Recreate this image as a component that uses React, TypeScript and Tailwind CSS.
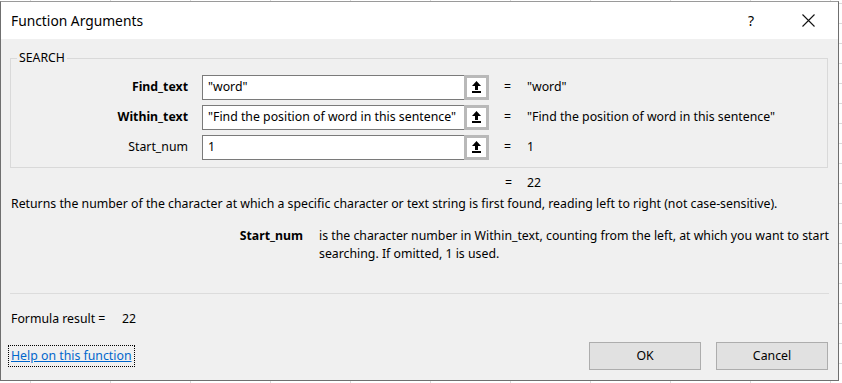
import React from "react";

const F = { fontFamily: '"Noto Sans", "Open Sans", sans-serif' };

function RefButton() {
  return (
    <div className="w-[25px] h-[25px] border-[3px] border-[#b9b9b9] bg-white flex items-center justify-center shrink-0">
      <svg width="9" height="13" viewBox="0 0 9 13">
        <polygon points="4.5,0 9,5 0,5" fill="#000" />
        <rect x="3" y="4" width="3" height="5" fill="#000" />
        <rect x="0" y="10" width="9" height="2" fill="#000" />
      </svg>
    </div>
  );
}

function ArgRow({ label, bold, value, result }: { label: string; bold?: boolean; value: string; result: string }) {
  return (
    <div className="flex items-center h-[25px]">
      <div className={`w-[191px] shrink-0 text-right pr-[14px] text-[12.3px] text-black ${bold ? "font-bold" : ""}`}>{label}</div>
      <div className="w-[262px] shrink-0 h-[25px] border border-[#7a7a7a] border-r-0 bg-white flex items-center pl-[5px] text-[12.3px] text-black whitespace-nowrap overflow-hidden">
        {value}
      </div>
      <RefButton />
      <div className="w-[23px] ml-[15px] shrink-0 text-[12.3px] text-black">=</div>
      <div className="text-[12.3px] text-black whitespace-nowrap">{result}</div>
    </div>
  );
}

export default function App() {
  return (
    <div
      className="relative w-[842px] h-[383px] overflow-hidden bg-white bg-[repeating-linear-gradient(90deg,transparent_0_30px,#dadada_30px_31px,transparent_31px_80px),repeating-linear-gradient(0deg,transparent_0_19px,#dadada_19px_20px)]"
      style={F}
    >
      <div className="absolute left-0 top-[1px] w-[839px] h-[380px] border border-[#6f6f6f] border-t-[#9a9a9a] bg-[#f0f0f0] flex flex-col">
        {/* title bar */}
        <div className="h-[37px] bg-white flex items-center shrink-0">
          <div className="ml-[10px] text-[13.8px] text-black leading-none">Function Arguments</div>
          <div className="ml-auto flex items-center">
            <div className="text-[14px] text-black leading-none w-[10px] text-center">?</div>
            <div className="ml-[46px] mr-[23px]">
              <svg width="13" height="13" viewBox="0 0 13 13">
                <path d="M0.5 0.5 L12.5 12.5 M12.5 0.5 L0.5 12.5" stroke="#111" strokeWidth="1.1" />
              </svg>
            </div>
          </div>
        </div>

        {/* body */}
        <div className="flex flex-col px-[9px] pt-[12px]">
          <fieldset className="border border-[#d9d9d9] h-[117px] mr-[1px] pl-0 pb-0">
            <legend className="ml-[6px] px-[2px] text-[12.3px] text-black leading-[14px]">SEARCH</legend>
            <div className="flex flex-col gap-[5px] mt-[10px]">
              <ArgRow label="Find_text" bold value={'"word"'} result={'"word"'} />
              <ArgRow label="Within_text" bold value={'"Find the position of word in this sentence"'} result={'"Find the position of word in this sentence"'} />
              <ArgRow label="Start_num" value="1" result="1" />
            </div>
          </fieldset>

          <div className="flex items-center h-[18px] mt-[6px] text-[12.3px] text-black">
            <div className="ml-[495px] w-[22px]">=</div>
            <div>22</div>
          </div>

          <div className="mt-[3px] pl-[1px] text-[12.3px] text-black leading-[18px] whitespace-nowrap">
            Returns the number of the character at which a specific character or text string is first found, reading left to right (not case-sensitive).
          </div>

          <div className="flex mt-[14px] text-[12.3px] text-black leading-[18px]">
            <div className="w-[309px] shrink-0 text-right pr-[16px] font-bold">Start_num</div>
            <div className="w-[510px]">
              is the character number in Within_text, counting from the left, at which you want to start searching. If omitted, 1 is used.
            </div>
          </div>

          <div className="h-px bg-[#dcdcdc] mt-[30px]" />

          <div className="mt-[16px] pl-[1px] text-[12.3px] text-black leading-[18px] flex">
            <span className="w-[111px]">Formula result =</span>
            <span>22</span>
          </div>

          <div className="flex items-center mt-[14px]">
            <div className="border border-dotted border-black px-[2px] h-[22px] flex items-center -ml-[2px]">
              <a href="#" className="text-[12.3px] text-[#0066cc] underline leading-none">Help on this function</a>
            </div>
            <div className="ml-auto flex gap-[15px] mr-[1px]">
              <button className="w-[112px] h-[28px] bg-[#e1e1e1] border border-[#adadad] text-[12.3px] text-black">OK</button>
              <button className="w-[112px] h-[28px] bg-[#e1e1e1] border border-[#adadad] text-[12.3px] text-black">Cancel</button>
            </div>
          </div>
        </div>
      </div>
    </div>
  );
}
